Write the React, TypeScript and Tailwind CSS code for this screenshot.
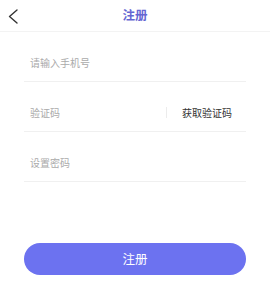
import React from "react";

export default function App() {
  return (
    <div
      className="w-[270px] h-[292px] bg-white flex flex-col"
      style={{ fontFamily: '"Noto Sans CJK SC", "Noto Sans", sans-serif' }}
    >
      <div className="relative h-[32px] shrink-0 border-b border-[#f3f3f3] flex items-center justify-center">
        <svg
          className="absolute left-0 top-0"
          width="26"
          height="32"
          viewBox="0 0 26 32"
          fill="none"
        >
          <polyline
            points="17,10 9.5,16.5 17,23"
            stroke="#333333"
            strokeWidth="1.4"
            strokeLinecap="round"
            strokeLinejoin="round"
          />
        </svg>
        <span className="text-[12.5px] font-bold text-[#6466d2] leading-none">注册</span>
      </div>

      <div className="px-[24px] flex flex-col">
        <div className="mt-[12px] h-[38px] border-b border-[#f0f0f0] flex items-center pl-[6px]">
          <span className="text-[10px] text-[#aaaaaa] leading-none">请输入手机号</span>
        </div>
        <div className="mt-[12px] h-[38px] border-b border-[#f0f0f0] flex items-center pl-[6px]">
          <span className="text-[10px] text-[#aaaaaa] leading-none flex-1">验证码</span>
          <div className="w-px h-[11px] bg-[#ececec]" />
          <span className="ml-[15px] mr-[14px] text-[10px] text-[#333333] leading-none">获取验证码</span>
        </div>
        <div className="mt-[12px] h-[38px] border-b border-[#f0f0f0] flex items-center pl-[6px]">
          <span className="text-[10px] text-[#aaaaaa] leading-none">设置密码</span>
        </div>
      </div>

      <div className="px-[24px] mt-[61px]">
        <div className="h-[32px] rounded-full bg-[#6c72f0] flex items-center justify-center">
          <span className="text-[12.5px] text-white leading-none">注册</span>
        </div>
      </div>
    </div>
  );
}
